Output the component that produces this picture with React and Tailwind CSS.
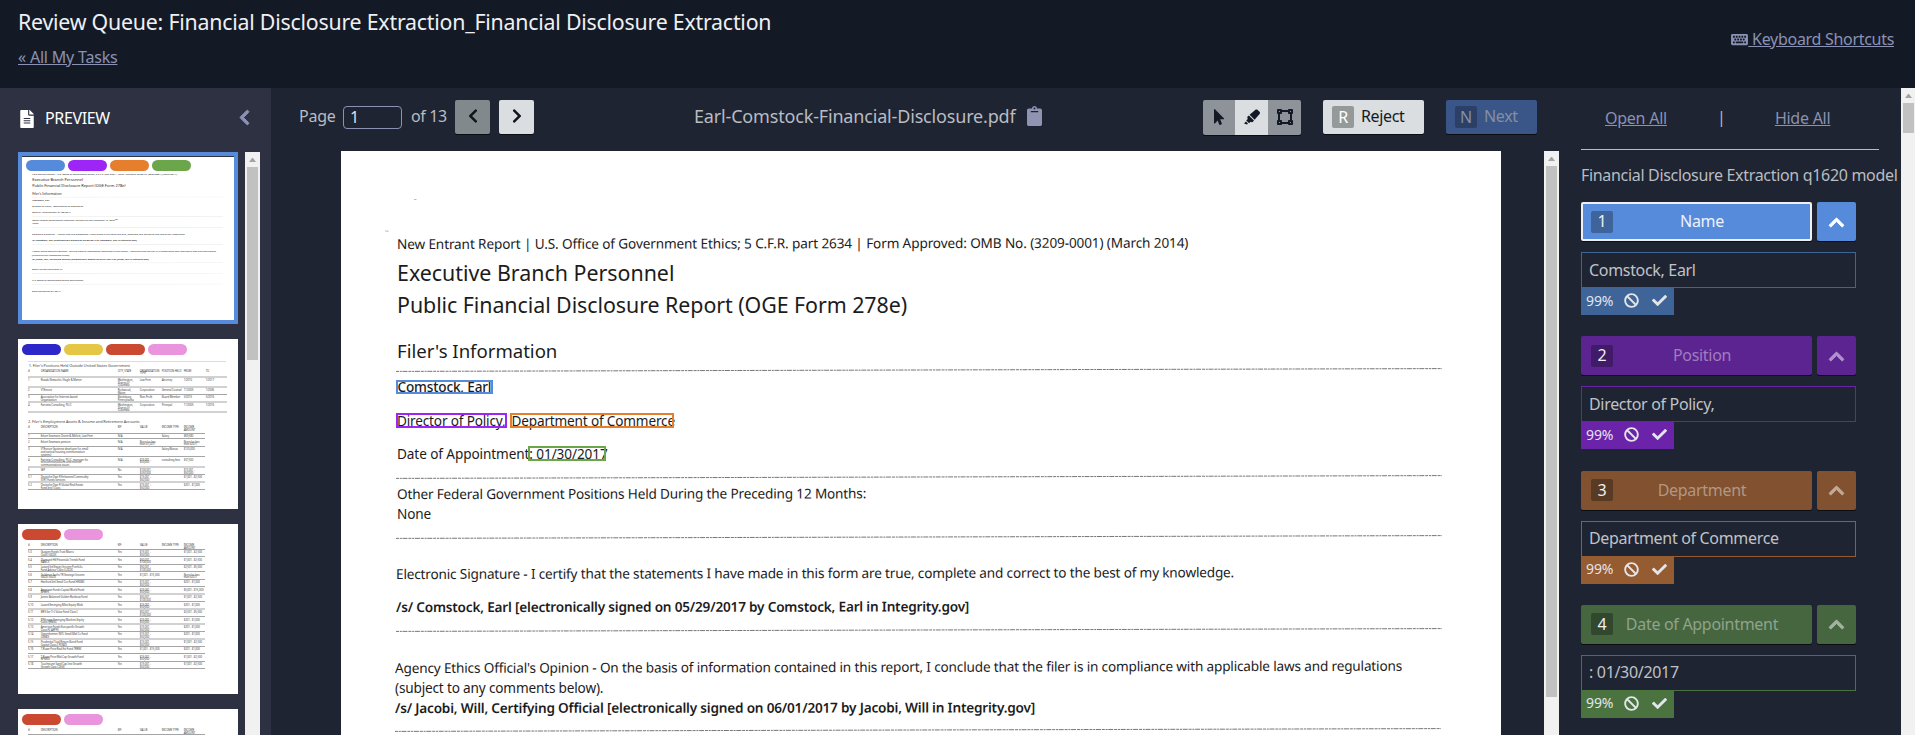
import React from "react";
import {
  FaBan,
  FaCheck,
  FaChevronLeft,
  FaChevronRight,
  FaChevronUp,
  FaClipboard,
  FaFileAlt,
  FaHighlighter,
  FaKeyboard,
  FaMousePointer,
  FaVectorSquare,
} from "react-icons/fa";

function ScrollBar({ className, thumb }) {
  return (
    <div className={"flex flex-col items-center bg-[#f1f1f1] " + className}>
      <div className="flex h-[15px] w-full shrink-0 items-center justify-center">
        <svg width="7" height="4" viewBox="0 0 7 4" className="mt-px">
          <path d="M3 0h1l3 4H0z" fill="#a3a3a3" />
        </svg>
      </div>
      <div className={"w-[11px] shrink-0 bg-[#c1c1c1] " + thumb} />
    </div>
  );
}

function Rule({ className }) {
  return (
    <svg className={"block h-[4px] w-[1046px] shrink-0 " + className} viewBox="0 0 1046 4">
      <line x1="0" y1="3.4" x2="1046" y2="0.6" stroke="#666" strokeWidth="0.9" strokeDasharray="3 0.8 2 0.7 5 0.9" />
    </svg>
  );
}

function Line({ className, children }) {
  return (
    <div className={"h-5 w-max origin-left shrink-0 leading-5 whitespace-pre " + className}>{children}</div>
  );
}

function Mark({ show, className }) {
  return show ? <span className={"absolute border-2 " + className} /> : null;
}

function ReportPage({ preview = false }) {
  return (
    <div className="flex h-[900px] w-[1160px] shrink-0 flex-col items-start bg-white pl-[55px] text-[13.6px] tracking-[-0.17px] text-[#1c1c1c]">
      <svg className="h-[83px] w-[100px] shrink-0 -ml-[20px]" viewBox="0 0 100 83">
        <path d="M38 48.5h2.5M9 80h3v1" stroke="#bbb" fill="none" />
      </svg>
      <Line className="ml-px -rotate-[0.1deg] tracking-[-0.13px]">
        New Entrant Report | U.S. Office of Government Ethics; 5 C.F.R. part 2634 | Form Approved: OMB No. (3209-0001) (March 2014)
      </Line>
      <Line className="mt-[9px] ml-px text-[21.4px] tracking-[-0.01px]">Executive Branch Personnel</Line>
      <Line className="mt-[12px] ml-px text-[21.4px] tracking-[-0.06px]">Public Financial Disclosure Report (OGE Form 278e)</Line>
      <Line className="mt-[26px] ml-px text-[18.6px] tracking-[-0.02px]">Filer's Information</Line>
      <Rule className="mt-[7px]" />
      <Line className="mt-[5px] ml-[1.5px] font-medium">
        <span className="relative">
          Comstock, Earl
          <Mark show={!preview} className="-left-[1.5px] top-[2.5px] h-[14px] w-[97px] border-[#568bdb]" />
        </span>
      </Line>
      <Line className="mt-[13.5px] ml-[1px]">
        <span className="relative mr-[6px]">
          Director of Policy,
          <Mark show={!preview} className="-left-px top-[2px] h-[15px] w-[111px] border-[#9d25f5]" />
        </span>
        <span className="relative">
          Department of Commerce
          <Mark show={!preview} className="-left-px top-[2px] h-[15px] w-[164px] border-[#e57f2d]" />
        </span>
      </Line>
      <Line className="mt-[13.5px] ml-[1px] tracking-[-0.1px]">
        Date of Appointment
        <span className="relative">
          : 01/30/2017
          <Mark show={!preview} className="-left-px top-[2px] h-[15px] w-[78px] border-[#6ba64b]" />
        </span>
      </Line>
      <Rule className="mt-[11px]" />
      <Line className="mt-[5px] ml-px -rotate-[0.08deg]">Other Federal Government Positions Held During the Preceding 12 Months:</Line>
      <Line className="ml-px">None</Line>
      <Rule className="mt-[10.5px]" />
      <Line className="mt-[25px] -rotate-[0.12deg]">
        Electronic Signature - I certify that the statements I have made in this form are true, complete and correct to the best of my knowledge.
      </Line>
      <Line className="mt-[13px] -rotate-[0.05deg] font-semibold tracking-[-0.2px]">/s/ Comstock, Earl [electronically signed on 05/29/2017 by Comstock, Earl in Integrity.gov]</Line>
      <Rule className="mt-[11px]" />
      <Line className="-ml-px mt-[26px] -rotate-[0.13deg]">
        Agency Ethics Official's Opinion - On the basis of information contained in this report, I conclude that the filer is in compliance with applicable laws and regulations
      </Line>
      <Line className="-ml-px">(subject to any comments below).</Line>
      <Line className="-ml-px -rotate-[0.05deg] font-semibold tracking-[-0.2px]">/s/ Jacobi, Will, Certifying Official [electronically signed on 06/01/2017 by Jacobi, Will in Integrity.gov]</Line>
      <Rule className="-ml-px mt-[10.5px]" />
      {preview && (
        <>
          <Line className="mt-[21px]">Other review conducted by</Line>
          <Rule className="mt-[12px]" />
          <Line className="mt-[24px]">U.S. Office of Government Ethics Certification</Line>
          <Rule className="mt-[12px]" />
          <Line className="mt-[24px]">Data Revised 06/01/2017</Line>
        </>
      )}
    </div>
  );
}

function Pills({ colors, className }) {
  return (
    <div className={"absolute flex gap-[3px] " + className}>
      {colors.map((c, i) => (
        <div key={i} className={"h-[11px] w-[39px] rounded-full " + c} />
      ))}
    </div>
  );
}

function TableRow({ cells, height, width, cols }) {
  return (
    <div
      className={"grid shrink-0 items-start border-b-[2px] border-[#777] pt-[4px] leading-[8px] whitespace-pre " + height + " " + width + " " + cols}
    >
      {cells.map((c, i) => (
        <div key={i}>{c}</div>
      ))}
    </div>
  );
}

const colsA = "grid-cols-[38px_231px_66px_66px_66px_66px_60px]";
const colsB = "grid-cols-[38px_231px_66px_66px_66px_60px]";

function PositionsPage() {
  const pos = [
    ["1", "Rivada Networks / Eagle & Mercer", "Washington,\nDistrict of\nColumbia", "Law Firm", "Attorney", "1/2010", "1/2017", "h-[30px]"],
    ["2", "VTEncore", "Rockwood,\nMaine", "Corporation", "General Counsel", "11/2005", "1/2006", "h-[22px]"],
    ["3", "Association for Internet-based\nOrganization", "Blacksburg,\nPennsylvania", "Non-Profit", "Board Member", "5/2015", "5/2016", "h-[23px]"],
    ["4", "Fairview Consulting, PLLC", "Washington,\nDistrict of\nColumbia", "Corporation", "Principal", "11/2005", "1/2016", "h-[30px]"],
  ];
  const assets = [
    ["1", "Eckert Seamans Cherin & Mellott, Law Firm", "N/A", "", "Salary", "$69,580", "h-[16px]"],
    ["2", "Eckert Seamans pension", "N/A", "None (or less\nthan $1,001)", "", "None (or less\nthan $201)", "h-[23px]"],
    ["3", "VTEncore (business developer for small\nand tactical housing communication\nsystems)", "N/A", "", "Salary/Bonus", "$125,000", "h-[31px]"],
    ["4", "Fairview Consulting, PLLC, manager for\ntelecommunications and internet\ncommunications issues", "N/A", "$15,001 -\n$50,000", "consulting fees", "$37,500", "h-[31px]"],
    ["5", "SEP", "No", "$100,001 -\n$250,000", "", "$15,001 -\n$50,000", "h-[22px]"],
    ["5.1", "Deutsche Dws Fl Enhanced Commodity\nSTRT Funds Services", "Yes", "$15,001 -\n$50,000", "", "$1,001 - $2,500", "h-[23px]"],
    ["5.2", "Deutsche Dws Fl Global Real Estate\nFund Inst'l Class", "Yes", "$15,001 -\n$50,000", "", "$201 - $1,000", "h-[23px]"],
  ];
  return (
    <div className="flex h-[510px] w-[660px] flex-col bg-white pt-[67px] pl-[30px] text-[8.4px] tracking-[-0.3px] text-[#444]">
      <div className="w-[594px] shrink-0 border-t border-[#999] pt-[5px] pl-[2px] text-[11.5px] leading-[14px] tracking-[-0.2px]">1. Filer's Positions Held Outside United States Government</div>
      <TableRow cols={colsA} height="h-[28px]" width="w-[597px]" cells={["#", "ORGANIZATION NAME", "CITY, STATE", "ORGANIZATION\nTYPE", "POSITION HELD", "FROM", "TO"]} />
      {pos.map((r) => (
        <TableRow key={r[0]} cols={colsA} height={r[7]} width="w-[597px]" cells={r.slice(0, 7)} />
      ))}
      <div className="mt-[21px] shrink-0 text-[11.5px] leading-[16px] tracking-[-0.2px]">2. Filer's Employment Assets & Income and Retirement Accounts</div>
      <TableRow cols={colsB} height="h-[27px]" width="w-[531px]" cells={["#", "DESCRIPTION", "EIF", "VALUE", "INCOME TYPE", "INCOME\nAMOUNT"]} />
      {assets.map((r) => (
        <TableRow key={r[0]} cols={colsB} height={r[6]} width="w-[531px]" cells={r.slice(0, 6)} />
      ))}
    </div>
  );
}

const assetRows = [
  ["5.3", "Guggen Funds Trust Macro\nClass I GIOIX", "$15,001 -\n$50,000", "$1,001 - $2,500"],
  ["5.4", "Diamond Hill Financials Trends Fund\nBANCX", "$50,001 -\n$100,000", "$1,001 - $2,500"],
  ["5.5", "Lazard Intl Equity Income Portfolio\nFund Advisor Class (LZIOX)", "$50,001 -\n$100,000", "$2,501 - $5,000"],
  ["5.6", "Goldman Sachs TR Strategic Income\nGSZIX GSZIX", "$1,001 - $15,000", "None (or less\nthan $201)"],
  ["5.7", "Hartford Intl Small Cos Fund HNSBX", "$15,001 -\n$50,000", "$201 - $1,000"],
  ["5.8", "American Funds Capital World Fund\nBFWFX", "$15,001 -\n$50,000", "$5,001 - $15,000"],
  ["5.9", "James Balanced Golden Rainbow Fund", "$50,001 -\n$100,000", "$1,001 - $2,500"],
  ["5.10", "Lazard Emerging Mkts Equity Multi", "$15,001 -\n$50,000", "$201 - $1,000"],
  ["5.11", "MFS Ser Tr I Value Fund Class I", "$50,001 -\n$100,000", "$2,501 - $5,000"],
  ["5.12", "JPMorgan Emerging Markets Equity\nClass I JEMSX", "$15,001 -\n$50,000", "$201 - $1,000"],
  ["5.13", "American Funds Europacific Growth\nClass F2 AEPFX", "$15,001 -\n$50,000", "$201 - $1,000"],
  ["5.14", "Oppenheimer INTL Small-Mid Co Fund\nOSMIX", "$15,001 -\n$50,000", "$201 - $1,000"],
  ["5.15", "Prudential Total Return Bond Fund\nCapital Class Z PDBZX", "$15,001 -\n$50,000", "$1,001 - $2,500"],
  ["5.16", "T-Rowe Price Real Est Fund TRREX", "$1,001 - $15,000", "$201 - $1,000"],
  ["5.17", "T-Rowe Price Mid-Cap Growth Fund\nRPMGX", "$15,001 -\n$50,000", "$1,001 - $2,500"],
  ["5.18", "Touchstone Sand Cap Inst Growth\nGrowth Class CISGX", "$15,001 -\n$50,000", "$1,001 - $2,500"],
];

function AssetsPage({ rows = assetRows }) {
  return (
    <div className="flex w-[660px] flex-col bg-white pt-[56px] pl-[30px] text-[8.4px] tracking-[-0.3px] text-[#444]">
      <TableRow cols={colsB} height="h-[21px]" width="w-[531px]" cells={["#", "DESCRIPTION", "EIF", "VALUE", "INCOME TYPE", "INCOME\nAMOUNT"]} />
      {rows.map((r) => (
        <TableRow key={r[0]} cols={colsB} height="h-[22.4px]" width="w-[531px]" cells={[r[0], r[1], "Yes", r[2], "", r[3]]} />
      ))}
    </div>
  );
}

function Thumb({ height = "h-[170px]", pills, children }) {
  return (
    <div className={"relative w-[220px] shrink-0 overflow-hidden bg-white " + height}>
      <div className="w-[660px] origin-top-left scale-[0.33333]">{children}</div>
      <Pills colors={pills} className="top-[5px] left-1" />
    </div>
  );
}

function PreviewPanel() {
  return (
    <aside className="flex w-[271px] shrink-0 flex-col bg-[#2d3142]">
      <div className="flex h-16 shrink-0 items-center pr-[21px] pb-[3px] pl-5 text-white">
        <FaFileAlt className="h-[18px] w-[14px]" />
        <span className="ml-[11px] pb-px text-[16px] leading-5 tracking-[-0.35px]">PREVIEW</span>
        <FaChevronLeft className="mt-[-2px] ml-auto h-[17px] w-[11px] stroke-current stroke-[30] text-[#8b91b3]" />
      </div>
      <div className="flex min-h-0 flex-1 pl-[18px]">
        <div className="flex w-[220px] flex-col gap-[15px] overflow-hidden">
          <div className="relative h-[172px] shrink-0 overflow-hidden border-4 border-[#568bdb] bg-white">
            <div className="h-px bg-[#2d3142]" />
            <div className="h-[163px] w-[212px] overflow-hidden">
              <div className="h-[900px] w-[1160px] origin-top-left scale-[0.1828]">
                <ReportPage preview />
              </div>
            </div>
            <Pills colors={["bg-[#568bdb]", "bg-[#9d25f5]", "bg-[#e57f2d]", "bg-[#6ba64b]"]} className="top-1 left-1 bg-white" />
          </div>
          <Thumb pills={["bg-[#2d27c9]", "bg-[#e6c645]", "bg-[#cb4931]", "bg-[#ea94dd]"]}>
            <PositionsPage />
          </Thumb>
          <Thumb pills={["bg-[#cb4931]", "bg-[#ea94dd]"]}>
            <AssetsPage />
          </Thumb>
          <Thumb height="h-[26px]" pills={["bg-[#cb4931]", "bg-[#ea94dd]"]}>
            <AssetsPage rows={[]} />
          </Thumb>
        </div>
        <ScrollBar className="ml-[7px] w-[15px]" thumb="h-[193px]" />
      </div>
    </aside>
  );
}

function Toolbar() {
  return (
    <div className="flex h-[63px] shrink-0 items-center pb-[5px] pl-7 text-[16px] text-[#b9bcc3]">
      <span className="w-[44px] pb-0.5">Page</span>
      <div className="flex h-[23px] w-[59px] items-center rounded-[4px] border border-[#8b91b3] pb-px pl-[6px] text-[#dfe1e5]">1</div>
      <span className="ml-[9px] w-[44px] pb-0.5 tracking-[-0.4px] whitespace-nowrap">of 13</span>
      <button className="flex h-[34px] w-[35px] items-center justify-center rounded-[2px] bg-[#82898c] text-[#10151d] shadow-[0_1px_0_#0a0d12]">
        <FaChevronLeft className="mt-[-2px] h-4 w-[10px]" />
      </button>
      <button className="ml-[9px] flex h-[34px] w-[35px] items-center justify-center rounded-[2px] bg-[#dadee1] text-[#10151d] shadow-[0_1px_0_#0a0d12]">
        <FaChevronRight className="mt-[-2px] h-4 w-[10px]" />
      </button>
      <span className="ml-[160px] w-[333px] pb-0.5 text-[18px] tracking-[-0.17px] whitespace-nowrap">Earl-Comstock-Financial-Disclosure.pdf</span>
      <FaClipboard className="mt-[-3px] h-5 w-[15px] text-[#8f94b3]" />
      <div className="ml-[161px] flex h-[35px] w-[98px] overflow-hidden rounded-[2px] bg-[#8e9299] text-[#141a25] shadow-[0_1px_0_#0a0d12]">
        <div className="flex w-8 items-center justify-center pb-px">
          <FaMousePointer className="h-4 w-[10px]" />
        </div>
        <div className="flex w-[33px] items-center justify-center bg-[#dadee1] pb-px">
          <FaHighlighter className="size-4" />
        </div>
        <div className="flex flex-1 items-center justify-center pb-px">
          <FaVectorSquare className="size-4" />
        </div>
      </div>
      <button className="ml-[22px] flex h-[34px] w-[101px] items-center rounded-[2px] bg-[#dadee1] pl-[9px] text-[#141a25] shadow-[0_1px_0_#0a0d12]">
        <span className="flex size-[22px] items-center justify-center rounded-[2px] bg-[#959999] text-white">R</span>
        <span className="ml-[7px] pb-0.5 tracking-[-0.35px]">Reject</span>
      </button>
      <button className="ml-[22px] flex h-[34px] w-[91px] items-center rounded-[2px] bg-[#3a5588] pl-[9px] text-[#858fa3] shadow-[0_1px_0_#0a0d12]">
        <span className="flex size-[22px] items-center justify-center rounded-[2px] bg-[#2c4067]">N</span>
        <span className="ml-[7px] pb-0.5 tracking-[-0.35px]">Next</span>
      </button>
    </div>
  );
}

const fields = [
  { key: 1, label: "Name", value: "Comstock, Earl", button: "bg-[#568bdb] text-[#eef2fa]", ring: "border-2 border-[#eef0f4] pl-2", keyBox: "bg-[#3f649b]", frame: "border-[#3f6498]", badge: "bg-[#3f6498]", arrow: "text-white" },
  { key: 2, label: "Position", value: "Director of Policy,", button: "bg-[#5c2491] text-[#a07cbe]", ring: "pl-[10px] pr-[2px]", keyBox: "bg-[#411b67]", frame: "border-[#6b24a9]", badge: "bg-[#6b24a9]", arrow: "text-[#af92ca]" },
  { key: 3, label: "Department", value: "Department of Commerce", button: "bg-[#815130] text-[#b39781]", ring: "pl-[10px] pr-[2px]", keyBox: "bg-[#593a24]", frame: "border-[#955b31]", badge: "bg-[#955b31]", arrow: "text-[#c1a998]" },
  { key: 4, label: "Date of Appointment", value: ": 01/30/2017", button: "bg-[#466640] text-[#90a38c]", ring: "pl-[10px] pr-[2px]", keyBox: "bg-[#31472e]", frame: "border-[#4b7340]", badge: "bg-[#4b7340]", arrow: "text-[#a3b39f]" },
];

function Field({ f }) {
  return (
    <div className="h-[134.33px] shrink-0">
      <div className="flex gap-[5px]">
        <button className={"flex h-[39px] w-[231px] items-center rounded-[2px] tracking-[-0.3px] shadow-[0_1px_0_#0a0d12] " + f.button + " " + f.ring}>
          <span className={"flex size-[22px] shrink-0 items-center justify-center rounded-[2px] pb-px text-[#eef0f4] " + f.keyBox}>{f.key}</span>
          <span className="flex-1 pr-[27px] pb-px pl-[8px] text-center whitespace-nowrap">{f.label}</span>
        </button>
        <button className={"flex size-[39px] items-center justify-center rounded-[2px] shadow-[0_1px_0_#0a0d12] " + f.button}>
          <FaChevronUp className={"mt-px size-[17px] stroke-current stroke-[25] " + f.arrow} />
        </button>
      </div>
      <div className={"mt-[11px] flex h-[36px] w-[275px] items-center border pb-[1px] pl-[7px] tracking-[-0.32px] text-[#c0c2c8] " + f.frame}>{f.value}</div>
      <div className={"-mt-px flex h-7 w-[93px] items-center pl-[5px] text-[#e3e5ea] " + f.badge}>
        <span className="w-[38px] pb-[2px] text-[14px] tracking-[-0.1px]">99%</span>
        <FaBan className="mt-[-1px] size-[15px]" />
        <FaCheck className="mt-[-1px] ml-[13px] size-[15px]" />
      </div>
    </div>
  );
}

function LabelsPanel() {
  return (
    <aside className="flex h-full w-[342px] shrink-0 flex-col overflow-hidden pl-[22px] text-[16px]">
      <div className="flex h-[62px] w-[298px] shrink-0 items-center border-b border-[#b9bcc3] pb-[2px] pl-6 text-[#8b91b3]">
        <span className="underline">Open All</span>
        <span className="ml-[50px] w-[8px] pb-px text-center text-[#b9bcc3]">|</span>
        <span className="ml-[50px] underline">Hide All</span>
      </div>
      <div className="mt-[13px] h-6 shrink-0 leading-6 tracking-[-0.32px] whitespace-nowrap text-[#b9bcc3]">Financial Disclosure Extraction q1620 model</div>
      <div className="mt-[15px] flex flex-col">
        {fields.map((f) => (
          <Field key={f.key} f={f} />
        ))}
      </div>
    </aside>
  );
}

export default function App() {
  return (
    <div className="flex h-[735px] w-[1915px] flex-col overflow-hidden bg-[#1e2431] font-['Noto_Sans',sans-serif] tracking-[-0.25px]">
      <header className="flex h-[88px] shrink-0 items-start justify-between bg-[#141a25] pr-[21px] pl-[18px]">
        <div>
          <h1 className="mt-[8px] h-7 text-[21.33px] leading-7 tracking-[-0.22px] whitespace-nowrap text-[#eef0f4]">
            Review Queue: Financial Disclosure Extraction_Financial Disclosure Extraction
          </h1>
          <a className="mt-[9px] block text-[16px] leading-6 tracking-[-0.2px] text-[#8b91b3] underline">« All My Tasks</a>
        </div>
        <a className="mt-[27px] flex items-center text-[16px] leading-6 tracking-[-0.3px] text-[#8b91b3]">
          <FaKeyboard className="h-[15px] w-[17px]" />
          <span className="whitespace-pre underline"> Keyboard Shortcuts</span>
        </a>
      </header>
      <div className="flex min-h-0 flex-1">
        <PreviewPanel />
        <main className="flex w-[1288px] shrink-0 flex-col">
          <Toolbar />
          <div className="flex min-h-0 flex-1 justify-between overflow-hidden pl-[70px]">
            <ReportPage />
            <ScrollBar className="w-[15px]" thumb="h-[531px]" />
          </div>
        </main>
        <LabelsPanel />
        <ScrollBar className="w-[14px]" thumb="h-[30px]" />
      </div>
    </div>
  );
}
